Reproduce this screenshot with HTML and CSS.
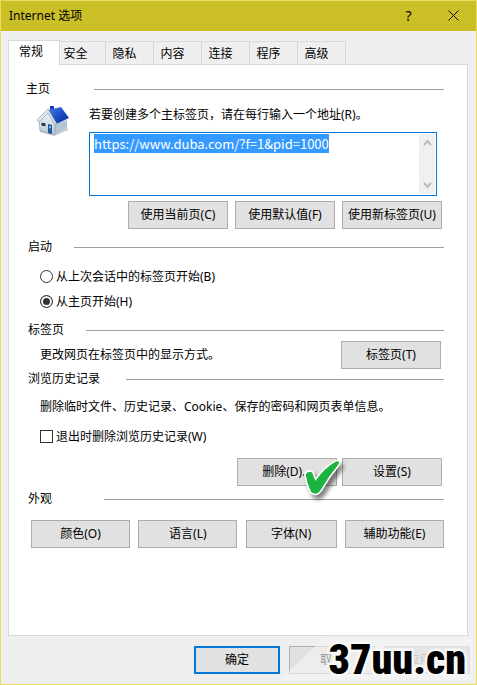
FILE: index.html
```html
<!DOCTYPE html>
<html lang="zh-CN">
<head>
    <meta charset="UTF-8">
    <title>Internet 选项</title>
    <link rel="stylesheet" href="styles.css">
</head>
<body>
<div class="window">
    <header class="titlebar">
        <h1>Internet 选项</h1>
        <button class="title-btn" type="button" aria-label="帮助">?</button>
        <button class="title-btn" type="button" aria-label="关闭">
            <svg width="11" height="11" viewBox="0 0 11 11"><path d="M.5 .5l10 10M10.5 .5l-10 10" stroke="#111" fill="none"/></svg>
        </button>
    </header>

    <nav class="tabs">
        <button class="tab select" type="button">常规</button>
        <button class="tab" type="button">安全</button>
        <button class="tab" type="button">隐私</button>
        <button class="tab" type="button">内容</button>
        <button class="tab" type="button">连接</button>
        <button class="tab" type="button">程序</button>
        <button class="tab" type="button">高级</button>
    </nav>

    <main class="panel">
        <section class="home">
            <h2 class="wide">主页</h2>
            <div class="home-body">
                <svg class="house" width="34" height="32" viewBox="0 0 34 32">
                    <defs>
                        <linearGradient id="roof" x1="0" y1="0" x2="1" y2="1">
                            <stop offset="0" stop-color="#4f83e8"/>
                            <stop offset=".5" stop-color="#1c4fc8"/>
                            <stop offset="1" stop-color="#0b2c94"/>
                        </linearGradient>
                        <linearGradient id="wall" x1="0" y1="0" x2="0" y2="1">
                            <stop offset="0" stop-color="#f2f7fa"/>
                            <stop offset="1" stop-color="#b4c6d2"/>
                        </linearGradient>
                    </defs>
                    <path d="M4 26l14 4 14-7v2l-14 6-14-4z" fill="#9aa4aa" opacity=".6"/>
                    <path d="M19 18l12-3v8l-12 7z" fill="#b3c5d1"/>
                    <path d="M3 15l9-9 7 13v11L4 26z" fill="url(#wall)" stroke="#8fa3b0" stroke-width=".7"/>
                    <path d="M14 1h4v4h-4z" fill="#1740ae"/>
                    <path d="M12 5l13-3 8 11-13 6z" fill="url(#roof)"/>
                    <path d="M1 15L12 4l9 15-2 .5L12 8 3 17z" fill="#dfe8ef" stroke="#7c95aa" stroke-width=".6"/>
                    <path d="M5 17l5 1v4l-5-1z" fill="#283a46" stroke="#eef4f8" stroke-width=".8"/>
                    <path d="M12 19l4 1v9l-4-1z" fill="#245a94"/>
                    <path d="M13 21l2 .5v2l-2-.5z" fill="#8fc0e4"/>
                </svg>
                <label for="urls">若要创建多个主标签页，请在每行输入一个地址(R)。</label>
            </div>
            <div class="urlbox">
                <textarea id="urls" spellcheck="false">https://www.duba.com/?f=1&amp;pid=1000</textarea>
                <div class="scroll">
                    <svg width="9" height="8" viewBox="0 0 9 8"><path d="M1 6l3.500-4L8 6" stroke="#bbb" stroke-width="2" fill="none"/></svg>
                    <svg width="9" height="8" viewBox="0 0 9 8"><path d="M1 2l3.500 4L8 2" stroke="#bbb" stroke-width="2" fill="none"/></svg>
                </div>
            </div>
            <div class="btns">
                <button class="btn" type="button">使用当前页(C)</button>
                <button class="btn" type="button">使用默认值(F)</button>
                <button class="btn" type="button">使用新标签页(U)</button>
            </div>
        </section>

        <section class="startup">
            <h2>启动</h2>
            <div class="check">
                <input type="radio" name="start" id="last"><label for="last">从上次会话中的标签页开始(B)</label>
            </div>
            <div class="check">
                <input type="radio" name="start" id="home" checked><label for="home">从主页开始(H)</label>
            </div>
        </section>

        <section>
            <h2>标签页</h2>
            <div class="tab-row">
                <p>更改网页在标签页中的显示方式。</p>
                <button class="btn" type="button">标签页(T)</button>
            </div>
        </section>

        <section class="history">
            <h2>浏览历史记录</h2>
            <p>删除临时文件、历史记录、Cookie、保存的密码和网页表单信息。</p>
            <div class="check">
                <input type="checkbox" id="quit"><label for="quit">退出时删除浏览历史记录(W)</label>
            </div>
            <div class="btns">
                <div class="marked">
                    <button class="btn" type="button">删除(D)...</button>
                    <svg class="tick" width="52" height="52" viewBox="0 0 48 48">
                        <path d="M8 19q2-4 6-2l3 8Q25 13 36 7q4-1 2 3-9 11-16 23-4 6-9 2Q9 27 8 19z" fill="#1cb33f" stroke="#fff" stroke-width="3" stroke-linejoin="round" paint-order="stroke"/>
                    </svg>
                </div>
                <button class="btn" type="button">设置(S)</button>
            </div>
        </section>

        <section class="look">
            <h2 class="wider">外观</h2>
            <div class="look-btns">
                <button class="btn" type="button">颜色(O)</button>
                <button class="btn" type="button">语言(L)</button>
                <button class="btn narrow" type="button">字体(N)</button>
                <button class="btn" type="button">辅助功能(E)</button>
            </div>
        </section>
    </main>

    <footer class="actions">
        <button class="btn default" type="button">确定</button>
        <button class="btn" type="button">取消</button>
        <button class="btn" type="button" disabled>应用(A)</button>
        <div class="watermark"><span>37uu.cn</span></div>
    </footer>
</div>
<script>
    var urls = document.getElementById("urls");
    urls.focus();
    urls.select();
</script>
</body>
</html>
```
FILE: styles.css
```css
*{
    margin: 0;
    padding: 0;
    box-sizing: border-box;
}
body,button,textarea{
    font-family: "Noto Sans", "Noto Sans CJK SC", sans-serif;
    font-size: 12px;
    line-height: 16px;
    color: #000;
}
.window{
    display: flex;
    flex-direction: column;
    min-height: 100vh;
    border: 1px solid #e8de5c;
    background: #efefef;
}
.titlebar{
    display: flex;
    align-items: center;
    height: 30px;
    padding-left: 8px;
    background: #cbbf28;
}
.titlebar h1{
    flex: 1;
    font-size: 12px;
    font-weight: normal;
}
.title-btn{
    width: 45px;
    height: 30px;
    border: none;
    background: none;
    font-size: 14px;
}
.tabs{
    display: flex;
    align-items: flex-end;
    margin: 9px 7px 0;
}
.tab{
    flex: 0 1 49px;
    height: 23px;
    margin-left: -1px;
    padding: 2px 10px 0 0;
    border: 1px solid #d9d9d9;
    border-bottom: none;
    background: #efefef;
}
.tab.select{
    position: relative;
    z-index: 1;
    flex-basis: 52px;
    height: 25px;
    margin: 0 0 -1px;
    padding: 0 12px 2px 6px;
    background: #fff;
}
.tab.select + .tab{
    flex-basis: 47px;
    padding-right: 14px;
}
.panel{
    flex: 1;
    margin: 0 8px 0 7px;
    padding: 16px 23px 0 19px;
    border: 1px solid #d9d9d9;
    background: #fff;
}
h2{
    display: flex;
    align-items: center;
    gap: 22px;
    font-size: 12px;
    font-weight: normal;
}
h2:after{
    content: "";
    flex: 1;
    height: 1px;
    background: #a0a0a0;
}
h2.wide{
    gap: 44px;
}
h2.wider{
    gap: 52px;
}
.home{
    margin-left: -2px;
}
.home-body{
    display: flex;
    gap: 19px;
    height: 35px;
    padding: 8px 0 0 10px;
}
.home-body label{
    padding-top: 2px;
}
.house{
    flex: none;
}
.urlbox{
    display: flex;
    height: 64px;
    margin: 0 7px 0 63px;
    border: 1px solid #0078d7;
}
.urlbox textarea{
    flex: 1;
    padding: 2px 4px;
    border: none;
    outline: none;
    resize: none;
    overflow: hidden;
    background: #fff;
    font-family: "Noto Sans CJK SC", sans-serif;
    font-size: 13px;
    line-height: 17px;
}
.urlbox textarea::selection{
    background: rgba(51, 153, 255, .99);
    color: #fff;
}
.scroll{
    display: flex;
    flex-direction: column;
    justify-content: space-between;
    align-items: center;
    width: 16px;
    margin: 1px;
    padding: 5px 0;
    background: #f0f0f0;
}
.btn{
    width: 100px;
    height: 28px;
    border: 1px solid #adadad;
    background: #e1e1e1;
    white-space: nowrap;
}
.btns{
    display: flex;
    justify-content: flex-end;
    gap: 7px;
    margin: 5px 2px 0 0;
}
.startup{
    margin-top: 10px;
}
.startup h2{
    margin-bottom: 9px;
}
.check{
    display: flex;
    align-items: center;
    gap: 3px;
    height: 25px;
    margin-left: 12px;
}
.check input{
    appearance: none;
    width: 13px;
    height: 13px;
    border: 1px solid #333;
    background: #fff;
}
.check input[type=radio]{
    border-radius: 50%;
}
.check input[type=radio]:checked{
    background: #333;
    box-shadow: inset 0 0 0 2px #fff;
}
.startup + section{
    margin-top: 8px;
}
.tab-row{
    display: flex;
    justify-content: space-between;
    margin: 3px 3px 0 12px;
}
.tab-row p{
    padding-top: 6px;
}
.history{
    margin-top: 2px;
}
.history h2{
    gap: 26px;
}
.history p{
    margin: 12px 0 9px 12px;
}
.history .btns{
    margin-top: 9px;
    gap: 5px;
}
.marked{
    position: relative;
}
.tick{
    position: absolute;
    left: 60px;
    top: -4px;
    filter: drop-shadow(3px 4px 2px rgba(0, 0, 0, .5));
}
.look{
    margin-top: 5px;
}
.look-btns{
    display: flex;
    justify-content: space-between;
    margin: 13px 0 0 3px;
}
.look-btns .btn{
    width: 99px;
}
.look-btns .narrow{
    width: 91px;
}
.actions{
    position: relative;
    display: flex;
    justify-content: flex-end;
    gap: 9px;
    padding: 10px 6px;
}
.actions .btn{
    width: 86px;
}
.actions .default{
    border: 2px solid #0078d7;
}
.actions .btn:disabled{
    border-color: #bfbfbf;
    background: #ccc;
    color: #838383;
}
.watermark{
    position: absolute;
    right: 4px;
    bottom: 4px;
    width: 192px;
    height: 41px;
    background: rgba(245, 245, 245, .6);
    clip-path: polygon(22% 0, 100% 0, 100% 100%, 0 100%);
    text-align: right;
}
.watermark span{
    padding-right: 6px;
    font-family: "Liberation Sans Narrow", "Roboto Condensed", "Roboto", sans-serif;
    font-size: 42px;
    font-weight: 900;
    line-height: 42px;
    color: #000;
    -webkit-text-stroke: 5px #f8f8f8;
    paint-order: stroke fill;
}
```
